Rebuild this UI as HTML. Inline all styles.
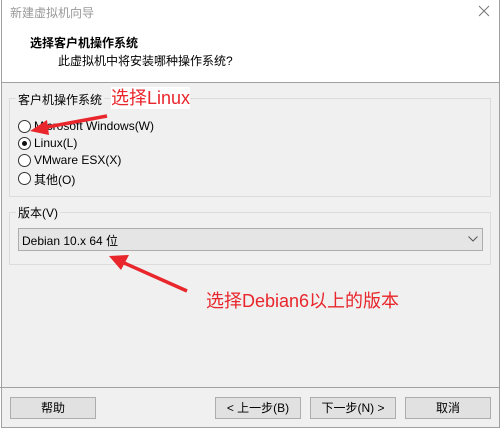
<!DOCTYPE html><html><head><meta charset="utf-8"><style>
body{margin:0;width:500px;height:433px;background:#fff;position:relative;overflow:hidden;font-family:"Liberation Sans","Noto Sans CJK SC",sans-serif;font-size:12px;color:#000}
.a{position:absolute;white-space:nowrap}
.win{position:absolute;left:1px;top:0;width:497px;height:427px;border:1px solid #a0a0a0;border-top:none;background:#f0f0f0}
.hdr{position:absolute;left:0;top:0;width:497px;height:82px;background:#fff;border-bottom:1px solid #a0a0a0}
.grp{position:absolute;border:1px solid #dcdcdc}
.lbl{position:absolute;background:#f0f0f0;padding:0 2px}
.btn{position:absolute;top:397px;width:84px;height:20px;border:1px solid #adadad;background:#e1e1e1;text-align:center;line-height:20px}
.r{position:absolute;left:18px;width:11px;height:11px;border:1px solid #333;border-radius:50%;background:#fff}
.red{color:#e8262b;font-size:18px}
</style></head><body>
<div class="win">
<div class="hdr"></div>
</div>
<div class="a" style="left:10px;top:4px;color:#999">新建虚拟机向导</div>
<svg class="a" style="left:478px;top:5px" width="12" height="12"><path d="M1 1L11 11M11 1L1 11" stroke="#777" stroke-width="1"/></svg>
<div class="a" style="left:30px;top:34px;font-weight:bold">选择客户机操作系统</div>
<div class="a" style="left:58px;top:52px">此虚拟机中将安装哪种操作系统?</div>
<div class="grp" style="left:9px;top:98px;width:480px;height:97px"></div>
<div class="lbl a" style="left:16px;top:91px">客户机操作系统</div>
<div class="r" style="top:120px"></div>
<div class="r" style="top:137px"><div style="position:absolute;left:3px;top:3px;width:5px;height:5px;border-radius:50%;background:#111"></div></div>
<div class="r" style="top:154px"></div>
<div class="r" style="top:172px"></div>
<div class="a" style="left:34px;top:119px">Microsoft Windows(W)</div>
<div class="a" style="left:34px;top:136px">Linux(L)</div>
<div class="a" style="left:34px;top:153px">VMware ESX(X)</div>
<div class="a" style="left:34px;top:171px">其他(O)</div>
<div class="grp" style="left:9px;top:212px;width:480px;height:51px"></div>
<div class="lbl a" style="left:16px;top:204px">版本(V)</div>
<div class="a" style="left:18px;top:228px;width:463px;height:21px;border:1px solid #adadad;background:#e5e5e5"></div>
<div class="a" style="left:22px;top:232px">Debian 10.x 64 位</div>
<svg class="a" style="left:468px;top:236px" width="10" height="6"><path d="M0.5 0.5L5 5L9.5 0.5" stroke="#555" fill="none"/></svg>
<div class="a" style="left:0;top:387px;width:499px;border-top:1px solid #a0a0a0"></div>
<div class="btn" style="left:10px">帮助</div>
<div class="btn" style="left:215px">&lt; 上一步(B)</div>
<div class="btn" style="left:310px">下一步(N) &gt;</div>
<div class="btn" style="left:405px">取消</div>
<div class="a red" style="left:111px;top:87px;background:#fff;line-height:22px">选择Linux</div>
<div class="a red" style="left:206px;top:287px">选择Debian6以上的版本</div>
<svg class="a" style="left:0;top:0" width="500" height="433">
<line x1="107" y1="116" x2="42" y2="128" stroke="#e8262b" stroke-width="3.5"/>
<polygon points="30,131 47,120 49,135" fill="#e8262b"/>
<line x1="187" y1="291" x2="122" y2="262" stroke="#e8262b" stroke-width="3.5"/>
<polygon points="109,256 129,255 121,270" fill="#e8262b"/>
</svg>
</body></html>
